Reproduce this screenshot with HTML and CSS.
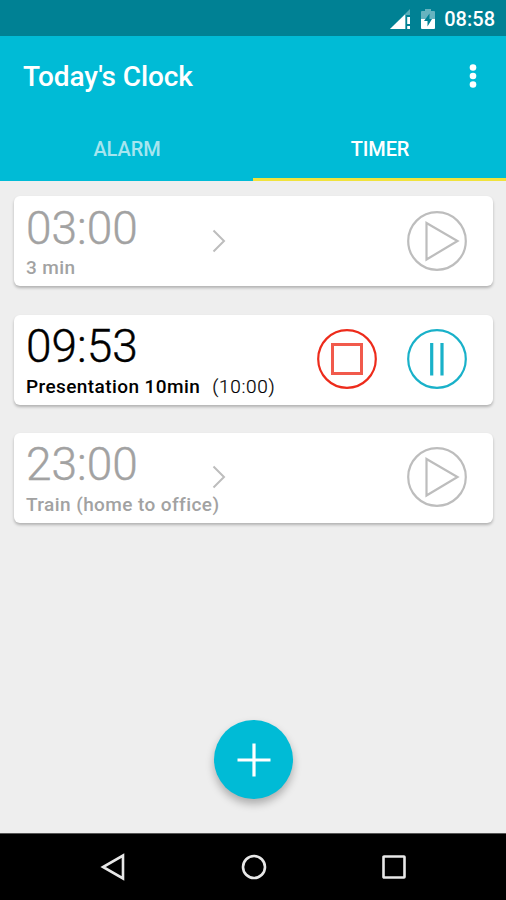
FILE: index.html
```html
<!DOCTYPE html>
<html lang="en">
<head>
<meta charset="utf-8">
<title>Today's Clock</title>
<link rel="stylesheet" href="styles.css">
</head>
<body>
<div class="screen">
  <div class="status">
    <svg class="signal" width="22" height="20" viewBox="0 0 22 20">
      <path class="solid" d="M0 20 20 0V6H16V20Z" opacity=".35"/>
      <path class="solid" d="M0 20 15 5.500V20Z"/>
      <path class="solid" d="M17.200 8H20V15H17.200ZM17.200 17H20V20H17.200Z"/>
    </svg>
    <svg class="battery" width="14" height="20" viewBox="0 0 14 20">
      <path class="solid" d="M4 0H10V2H13Q14 2 14 3V10H0V3Q0 2 1 2H4Z" opacity=".4"/>
      <path class="solid" d="M0 10H14V19Q14 20 13 20H1Q0 20 0 19Z"/>
      <path d="M8.500 4.500 3 12H6.500V17.500L11 10H8.500Z" fill="#008194"/>
    </svg>
    <span class="clock">08:58</span>
  </div>
  <header class="appbar">
    <div class="titlebar">
      <h1 class="title">Today's Clock</h1>
      <svg class="more" width="8" height="26" viewBox="0 0 8 26"><circle class="solid" cx="4" cy="4.500" r="3.300"/><circle class="solid" cx="4" cy="13" r="3.300"/><circle class="solid" cx="4" cy="21.500" r="3.300"/></svg>
    </div>
    <nav class="tabs"><div class="tab">ALARM</div><div class="tab active">TIMER</div></nav>
  </header>
  <main class="list">
    <section class="card idle">
      <div class="info"><div class="time">03:00</div><div class="label">3 min</div></div>
      <svg class="chevron" width="14" height="24" viewBox="0 0 14 24"><path d="M1.500 1.500 12 12 1.500 22.500"/></svg>
      <svg class="button play" width="60" height="60" viewBox="0 0 60 60"><circle cx="30" cy="30" r="28.800"/><path d="M19.500 12 50.500 30 19.500 48.500Z"/></svg>
    </section>
    <section class="card running">
      <div class="info"><div class="time">09:53</div><div class="label">Presentation 10min<span class="total">(10:00)</span></div></div>
      <svg class="button stop" width="60" height="60" viewBox="0 0 60 60"><circle cx="30" cy="30" r="28.800"/><path class="square" d="M15.500 15.500H44.500V44.500H15.500Z"/></svg>
      <svg class="button pause" width="60" height="60" viewBox="0 0 60 60"><circle cx="30" cy="30" r="28.800"/><path class="bars" d="M24.700 14V46.500M35 14V46.500"/></svg>
    </section>
    <section class="card idle">
      <div class="info"><div class="time">23:00</div><div class="label">Train (home to office)</div></div>
      <svg class="chevron" width="14" height="24" viewBox="0 0 14 24"><path d="M1.500 1.500 12 12 1.500 22.500"/></svg>
      <svg class="button play" width="60" height="60" viewBox="0 0 60 60"><circle cx="30" cy="30" r="28.800"/><path d="M19.500 12 50.500 30 19.500 48.500Z"/></svg>
    </section>
    <div class="fab"><svg width="34" height="34" viewBox="0 0 34 34"><path d="M17 .500V33.500M.500 17H33.500" stroke="#fff" stroke-width="3.200"/></svg></div>
  </main>
  <footer class="navbar">
    <svg width="28" height="30" viewBox="0 0 28 30"><path d="M24 3.500V26.500L4 15Z"/></svg>
    <svg width="28" height="30" viewBox="0 0 28 30"><circle cx="14" cy="15" r="11"/></svg>
    <svg width="28" height="30" viewBox="0 0 28 30"><rect x="3.500" y="4.500" width="21" height="21" rx=".5"/></svg>
  </footer>
</div>
</body>
</html>
```
FILE: styles.css
```css
* { box-sizing: border-box; }
body { margin: 0; font-family: Roboto, "Liberation Sans", sans-serif; }
svg { display: block; flex: none; fill: none; }
.solid { fill: #fff; }
.screen { width: 506px; height: 900px; display: flex; flex-direction: column; background: #eee; overflow: hidden; }
.status { height: 36px; flex: none; background: #008194; color: #fff; display: flex; justify-content: flex-end; align-items: center; padding-right: 11px; }
.signal { margin: 1px 9px 0 0; }
.battery { margin: 1px 9px 0 0; }
.clock { font-size: 20px; font-weight: 500; line-height: 36px; margin-top: 2px; }
.appbar { height: 145px; flex: none; background: #00bbd6; color: #fff; }
.titlebar { height: 80px; display: flex; align-items: center; justify-content: space-between; padding: 0 29px 0 23px; }
.title { margin: 1px 0 0; font-size: 28px; font-weight: 500; line-height: 36px; letter-spacing: -.1px; }
.more { margin-top: -1px; }
.tabs { display: flex; height: 65px; }
.tab { flex: 1; text-align: center; font-size: 20px; font-weight: 500; line-height: 66px; letter-spacing: -.1px; color: #a6e5ef; padding-left: 1px; }
.tab.active { color: #fff; border-bottom: 3px solid #f0e23c; }
.list { flex: 1; display: flex; flex-direction: column; padding: 15px 13px 0 14px; }
.card { height: 90px; flex: none; margin-bottom: 28px; display: grid; grid-template-columns: 186px 105px 90px 60px; align-items: center; padding-left: 12px; background: #fff; border-radius: 6px; box-shadow: 0 2px 3px rgba(0,0,0,.25); }
.card:first-child { margin-bottom: 29px; }
.info { grid-column: 1; grid-row: 1; white-space: nowrap; height: 90px; }
.time { font-size: 46px; font-weight: 300; line-height: 54px; margin-top: 5px; -webkit-text-stroke: .4px currentColor; }
.label { font-size: 19px; font-weight: 500; line-height: 24px; margin-top: 1px; letter-spacing: .41px; }
.card + .card .time { margin-top: 4px; margin-bottom: 2px; }
.card + .card .button, .card + .card .chevron { margin-bottom: 2px; }
.total { font-weight: 300; margin-left: 12px; letter-spacing: .7px; -webkit-text-stroke: .2px currentColor; }
.idle { color: #a2a2a2; }
.running { color: #000; }
.chevron { grid-column: 2; grid-row: 1; stroke: #bdbdbd; stroke-width: 2; }
.button { stroke-width: 2.200; }
.play { grid-column: 4; stroke: #bdbdbd; }
.stop { grid-column: 3; stroke: #ed2b1b; }
.square { stroke: #f15a4c; stroke-width: 3; }
.pause { grid-column: 4; stroke: #19b1c9; }
.bars { stroke-width: 3.200; }
.fab { width: 79px; height: 79px; margin: 169px 0 0 200px; border-radius: 50%; background: #00bbd6; display: flex; align-items: center; justify-content: center; box-shadow: 0 5px 8px rgba(0,0,0,.28); }
.navbar { height: 67px; flex: none; background: #000; border-top: 1px solid #555; display: flex; align-items: center; justify-content: space-between; padding: 0 98px 0 99px; }
.navbar svg { stroke: #e8e8e8; stroke-width: 2.600; }
```
